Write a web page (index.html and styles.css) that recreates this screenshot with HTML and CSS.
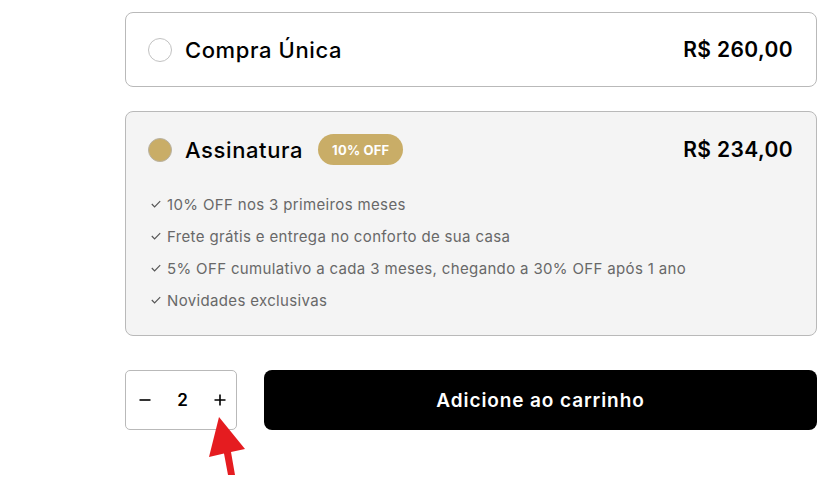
FILE: index.html
```html
<!DOCTYPE html>
<html lang="pt-BR">
<head>
<meta charset="utf-8">
<title>Compra</title>
<link rel="stylesheet" href="styles.css">
</head>
<body>
<div class="page">
  <div class="options">
    <div class="card">
      <div class="head">
        <span class="radio"></span>
        <span class="title">Compra Única</span>
        <span class="price">R$ 260,00</span>
      </div>
    </div>
    <div class="card card-active">
      <div class="head">
        <span class="radio radio-on"></span>
        <span class="title">Assinatura</span>
        <span class="badge">10% OFF</span>
        <span class="price">R$ 234,00</span>
      </div>
      <ul class="perks">
        <li><svg class="check" viewBox="0 0 10 8"><path d="M0.8 4 3.6 6.8 9.2 1.2" fill="none" stroke="currentColor" stroke-width="1.2"/></svg>10% OFF nos 3 primeiros meses</li>
        <li><svg class="check" viewBox="0 0 10 8"><path d="M0.8 4 3.6 6.8 9.2 1.2" fill="none" stroke="currentColor" stroke-width="1.2"/></svg>Frete grátis e entrega no conforto de sua casa</li>
        <li><svg class="check" viewBox="0 0 10 8"><path d="M0.8 4 3.6 6.8 9.2 1.2" fill="none" stroke="currentColor" stroke-width="1.2"/></svg>5% OFF cumulativo a cada 3 meses, chegando a 30% OFF após 1 ano</li>
        <li><svg class="check" viewBox="0 0 10 8"><path d="M0.8 4 3.6 6.8 9.2 1.2" fill="none" stroke="currentColor" stroke-width="1.2"/></svg>Novidades exclusivas</li>
      </ul>
    </div>
  </div>
  <div class="actions">
    <div class="qty">
      <svg class="qicon" viewBox="0 0 12 12"><path d="M0.5 6H11.5" stroke="#000" stroke-width="1.6"/></svg>
      <span class="qval">2</span>
      <svg class="qicon" viewBox="0 0 12 12"><path d="M0.5 6H11.5M6 0.5V11.5" stroke="#000" stroke-width="1.6"/></svg>
    </div>
    <button class="add">Adicione ao carrinho</button>
  </div>
  <svg class="arrow" viewBox="0 0 60 70" width="60" height="70">
    <polygon points="24,7 14,47 29,43.5 33,65 40,65 36,42 50,39" fill="#e51c20"/>
  </svg>
</div>
</body>
</html>
```
FILE: styles.css
```css
* { box-sizing: border-box; }
html, body { margin: 0; padding: 0; background: #fff; }
body {
  font-family: Inter, "Noto Sans", "Liberation Sans", sans-serif;
  color: #000;
  width: 820px;
  height: 477px;
  overflow: hidden;
}
.page {
  position: relative;
  padding: 12px 3px 0 125px;
  height: 477px;
}
.options {
  display: flex;
  flex-direction: column;
  gap: 24px;
}
.card {
  border: 1px solid #b9b9b9;
  border-radius: 8px;
  padding: 0 23px 0 22px;
  background: #fff;
}
.card .head {
  height: 73px;
  display: flex;
  align-items: center;
}
.card-active {
  background: #f4f4f4;
  padding-top: 22px;
  padding-bottom: 19px;
}
.card-active .head { height: 31px; }
.radio {
  width: 24px;
  height: 24px;
  border-radius: 50%;
  border: 1px solid #c2c2c2;
  background: #fff;
  flex: none;
}
.radio-on {
  background: #c9ad67;
  border-color: #b8b2a4;
}
.title {
  margin-left: 13px;
  font-size: 22px;
  font-weight: 500;
  letter-spacing: 0.6px;
}
.badge {
  margin-left: 15px;
  height: 31px;
  padding: 0 14px;
  border-radius: 16px;
  background: #c9ad67;
  color: #fff;
  font-size: 13px;
  font-weight: 700;
  letter-spacing: 0.2px;
  display: flex;
  align-items: center;
}
.price {
  margin-left: auto;
  font-size: 21px;
  font-weight: 600;
  letter-spacing: 0.4px;
}
.perks {
  list-style: none;
  margin: 23px 0 0 0;
  padding: 0 0 0 3px;
}
.perks li {
  height: 32px;
  display: flex;
  align-items: center;
  font-size: 15px;
  color: #686868;
  letter-spacing: 0.35px;
}
.check {
  width: 10px;
  height: 8px;
  margin-right: 6px;
  color: #555;
  flex: none;
}
.actions {
  display: flex;
  gap: 27px;
  margin-top: 34px;
  height: 60px;
}
.qty {
  width: 112px;
  border: 1px solid #b9b9b9;
  border-radius: 5px;
  display: flex;
  align-items: center;
  justify-content: space-between;
  padding: 0 10px 0 13px;
}
.qicon {
  width: 12px;
  height: 12px;
  flex: none;
}
.qval {
  font-size: 17px;
  font-weight: 600;
}
.add {
  flex: 1;
  border: 0;
  border-radius: 8px;
  background: #000;
  color: #fff;
  font-family: inherit;
  font-size: 19px;
  font-weight: 600;
  letter-spacing: 0.9px;
}
.arrow {
  position: absolute;
  left: 195px;
  top: 410px;
}
```
